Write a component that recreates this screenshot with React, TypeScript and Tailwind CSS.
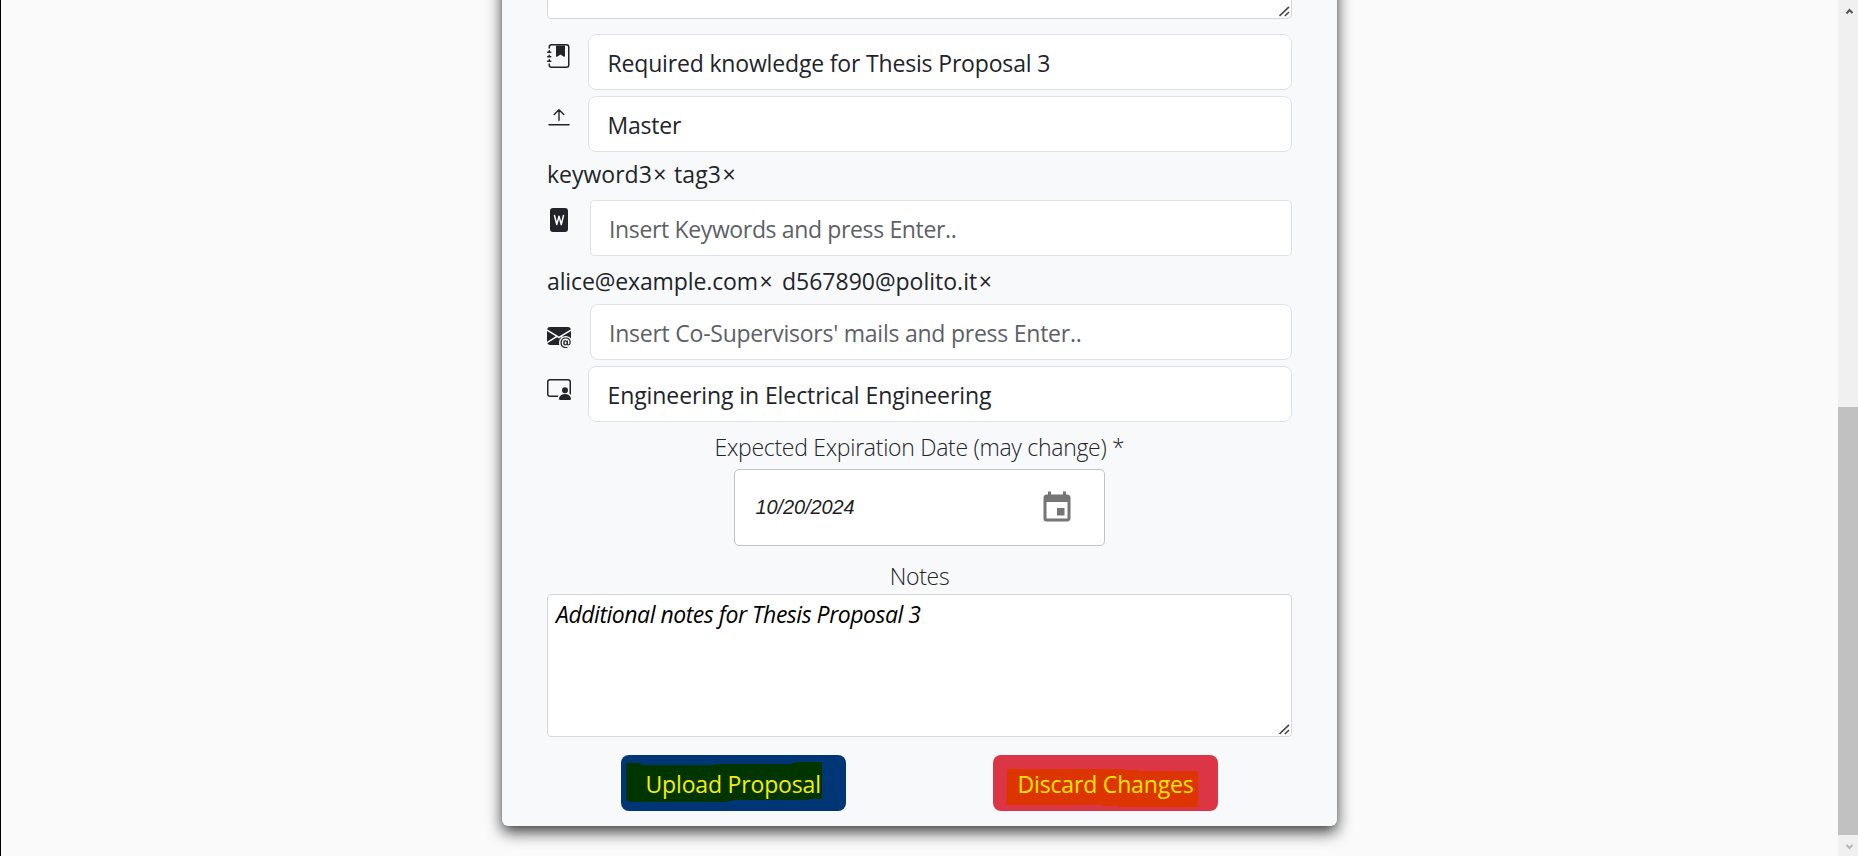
import React from "react";
import {
  BsJournalBookmarkFill,
  BsFileWordFill,
  BsEnvelopeAtFill,
  BsPersonVideo3,
} from "react-icons/bs";
import { MdEvent } from "react-icons/md";

function UploadIcon() {
  return (
    <svg width="24" height="24" viewBox="0 0 24 24" fill="none" stroke="#212529" strokeLinecap="round" strokeLinejoin="round">
      <path d="M2 18.8h20" strokeWidth="1.5" />
      <path d="M12 14.3V3.8M7.2 8.6 12 3.8l4.8 4.8" strokeWidth="1.4" />
    </svg>
  );
}

function ResizeGrip() {
  return (
    <svg className="absolute bottom-0.5 right-0.5" width="11" height="11" viewBox="0 0 11 11" stroke="#4a4a4a" strokeWidth="1.7">
      <path d="M0.5 10 10 0.8M5.8 10 10 6" />
    </svg>
  );
}

type RowProps = {
  icon: React.ReactNode;
  iconClass: string;
  boxClass: string;
  textClass: string;
  children: React.ReactNode;
};

function Row({ icon, iconClass, boxClass, textClass, children }: RowProps) {
  return (
    <div className="flex h-14 items-start justify-between">
      <div className={`h-6 w-6 text-[#212529] ${iconClass}`}>{icon}</div>
      <div className={`flex h-14 items-center border border-[#dee2e6] bg-white pt-px ${boxClass}`}>
        <span className={`whitespace-nowrap leading-8 ${textClass}`}>{children}</span>
      </div>
    </div>
  );
}

function Tag({ label, className }: { label: string; className: string }) {
  return (
    <span className={className}>
      {label}
      <span className="mx-[1.5px]">×</span>
    </span>
  );
}

export default function App() {
  return (
    <div className="flex h-[856px] w-full overflow-hidden bg-[#fafafa] font-['Open_Sans',sans-serif] text-[23px] text-[#212529]">
      <div className="w-px shrink-0 bg-black" />

      <main className="flex min-w-0 flex-1 items-start justify-center overflow-hidden">
        <div className="-mt-10 flex h-[866px] w-[835px] flex-col rounded-b-md bg-[#f8f9fb] px-[45px] shadow-[0_6px_15px_rgba(0,0,0,0.76),0_0_1px_rgba(0,0,0,0.4)]">
          <div className="relative shrink-0">
            <textarea className="block h-[59px] w-full resize-none rounded border border-[#d4d6d8] bg-white" />
            <ResizeGrip />
          </div>

          <div className="mt-[15px] flex flex-col gap-1.5">
            <Row icon={<BsJournalBookmarkFill size={24} />} iconClass="mt-2.5" boxClass="w-[704px] rounded-lg pl-[18.5px]" textClass="tracking-[-0.17px]">
              Required knowledge for Thesis Proposal 3
            </Row>
            <Row icon={<UploadIcon />} iconClass="mt-2.5" boxClass="w-[704px] rounded-lg pl-[18.5px]" textClass="tracking-[-0.2px]">
              Master
            </Row>
          </div>

          <div className="mt-[7px] flex h-8 gap-[6px] whitespace-nowrap leading-[30px]">
            <Tag label="keyword3" className="" />
            <Tag label="tag3" className="tracking-[0.1px]" />
          </div>

          <div className="mt-[9px]">
            <Row icon={<BsFileWordFill size={24} />} iconClass="mt-2" boxClass="w-[702px] rounded pl-[18px]" textClass="tracking-[-0.36px] text-[#5c6167]">
              Insert Keywords and press Enter..
            </Row>
          </div>

          <div className="mt-[10px] flex h-8 gap-2 whitespace-nowrap leading-[30px]">
            <Tag label="alice@example.com" className="tracking-[-0.12px]" />
            <Tag label="d567890@polito.it" className="" />
          </div>

          <div className="mt-1.5 flex flex-col gap-1.5">
            <Row icon={<BsEnvelopeAtFill size={24} />} iconClass="mt-5" boxClass="w-[702px] rounded-lg pl-[18px]" textClass="tracking-[-0.24px] text-[#5c6167]">
              Insert Co-Supervisors&apos; mails and press Enter..
            </Row>
            <Row icon={<BsPersonVideo3 size={24} />} iconClass="mt-2.5" boxClass="w-[704px] rounded-lg pl-[18.5px]" textClass="tracking-[-0.09px]">
              Engineering in Electrical Engineering
            </Row>
          </div>

          <label className="mt-[10px] h-8 self-center whitespace-nowrap font-light leading-[30px] tracking-[-0.29px]">
            Expected Expiration Date (may change) *
          </label>
          <div className="mt-[5px] flex h-[77px] w-[371px] shrink-0 items-center justify-between self-center rounded-[5px] border border-[#c2c3c4] bg-white pl-[20.5px] pr-[29px]">
            <span className="pb-[2px] font-['Liberation_Sans',Arial,sans-serif] text-[20px] italic tracking-[-0.1px] text-[#1f1f1f]">10/20/2024</span>
            <MdEvent size={36} className="text-[#757575]" />
          </div>

          <label className="mt-[15px] h-8 self-center font-light leading-[30px] tracking-[-0.29px]">Notes</label>
          <div className="relative mt-px shrink-0">
            <textarea
              className="block h-[143px] w-full resize-none rounded border border-[#d4d6d8] bg-white px-2 py-[3px] italic leading-8 tracking-[-0.47px] text-black outline-none"
              defaultValue="Additional notes for Thesis Proposal 3"
            />
            <ResizeGrip />
          </div>

          <div className="mt-[18px] flex justify-between pl-[74px] pr-[74px]">
            <button className="relative flex h-14 w-[225px] items-center rounded-lg bg-[#003576] pl-[24.5px] pt-px text-[#f5ee00]">
              <svg className="absolute left-0 top-0" width="225" height="56">
                <path d="M5 8H19L22 10H93V9H170L176 7H201V44H188V45H114L104 47H10L5 45Z" fill="#003500" />
              </svg>
              <span className="relative whitespace-nowrap leading-8 tracking-[-0.17px]">Upload Proposal</span>
            </button>
            <button className="relative flex h-14 w-[225px] items-center rounded-lg bg-[#dc3545] pl-[24.5px] pt-px text-[#ffe600]">
              <svg className="absolute left-0 top-0" width="225" height="56">
                <path d="M14 14H132V15H145V16H205V52H125V51H109V50H13.5Z" fill="#dc3500" />
              </svg>
              <span className="relative whitespace-nowrap leading-8 tracking-[-0.17px]">Discard Changes</span>
            </button>
          </div>
        </div>
      </main>

      <div className="flex w-5 shrink-0 flex-col items-center bg-[#f0f0f0]">
        <svg className="h-[407px] w-5" viewBox="0 0 20 407" fill="none">
          <path d="M8.5 13.5 11.5 10l3 3" stroke="#555" strokeWidth="2" />
        </svg>
        <div className="h-[428px] w-5 bg-[#c1c1c1]" />
        <svg className="h-[21px] w-5" viewBox="0 0 20 21" fill="none">
          <path d="M8.5 10 11.5 13l3-3" stroke="#b5b5b5" strokeWidth="2" />
        </svg>
      </div>
    </div>
  );
}
